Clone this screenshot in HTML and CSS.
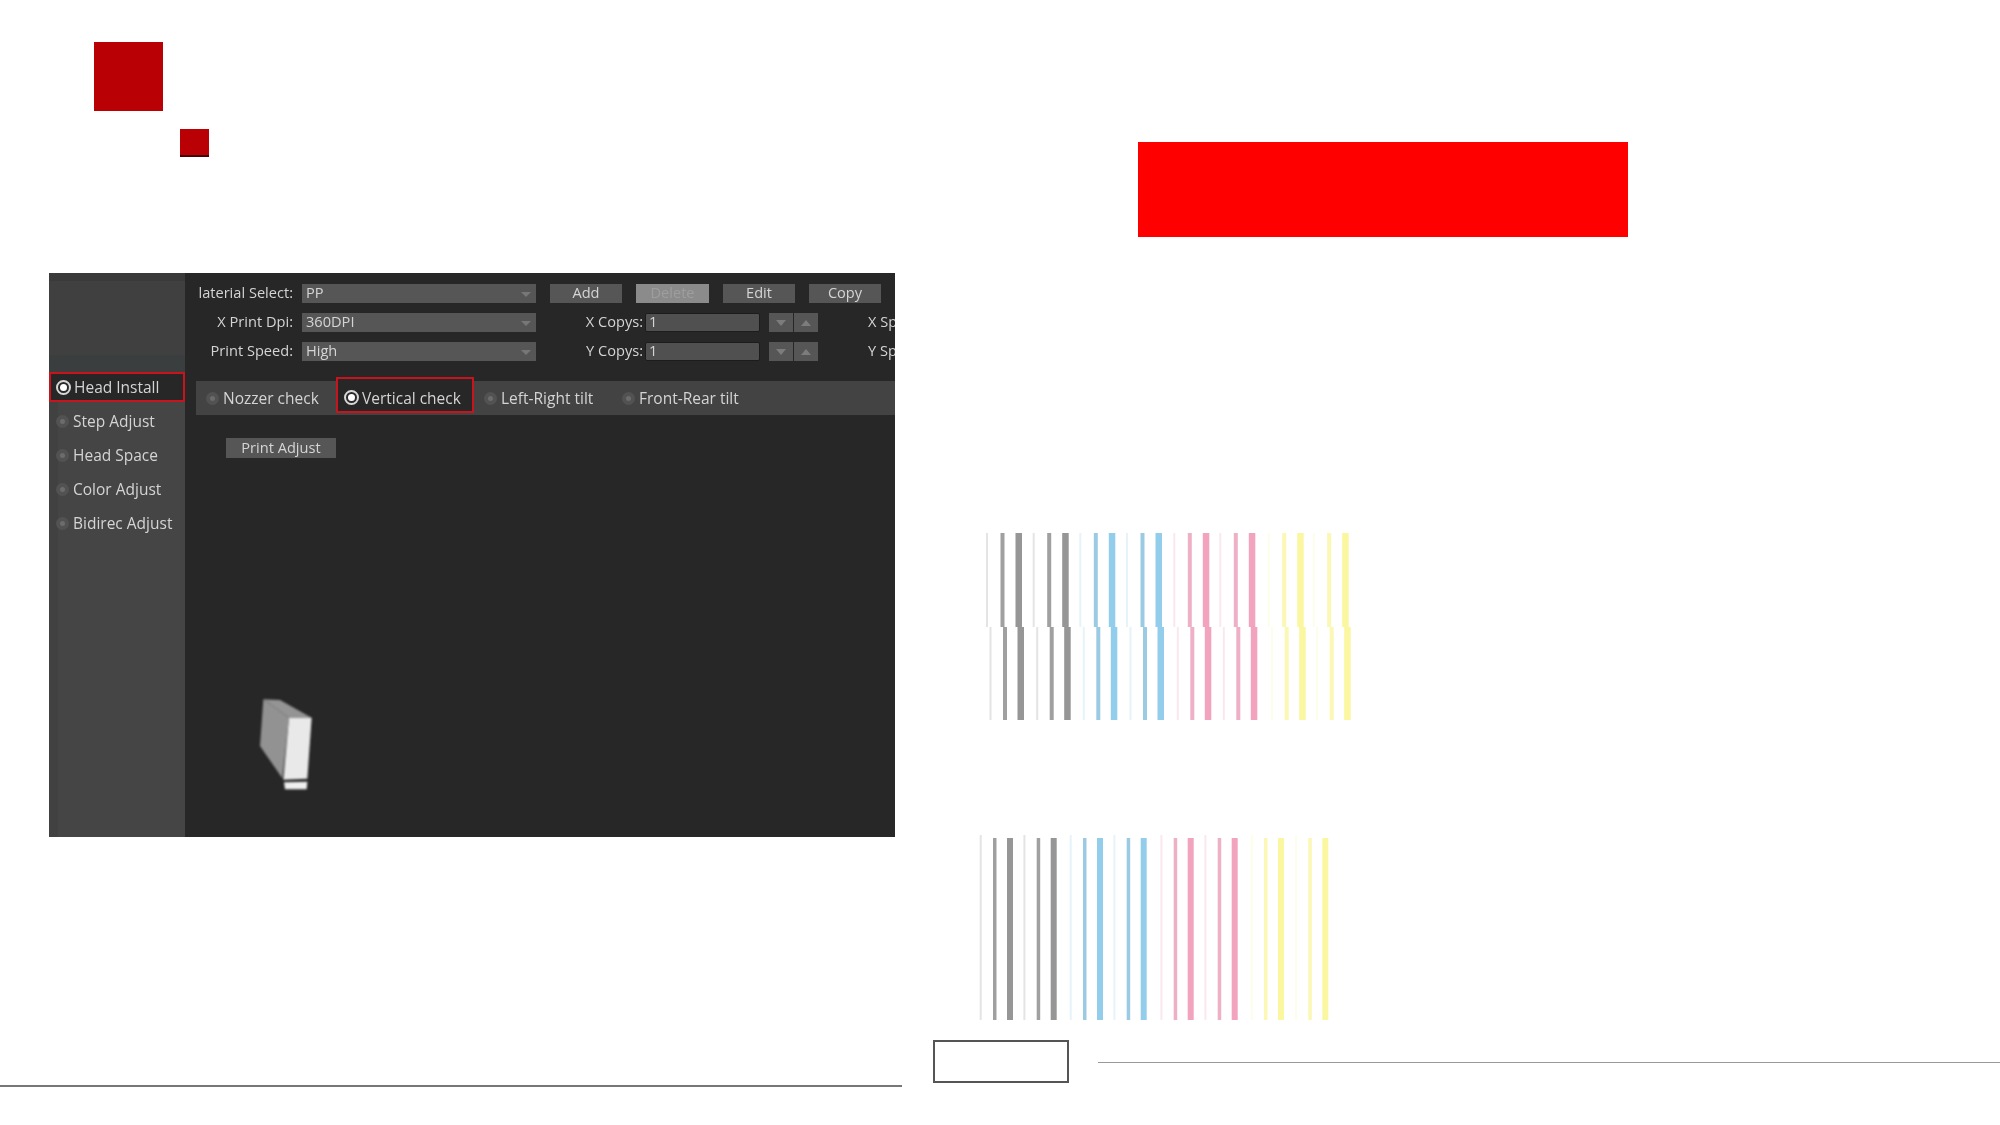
FILE: index.html
```html
<!DOCTYPE html>
<html lang="en">
<head>
<meta charset="UTF-8">
<title>Head Install - Vertical check</title>
<link rel="stylesheet" href="styles.css">
</head>
<body>

<div class="slide">
    <!-- left half: title marks, software capture, rule -->
    <div class="left">
        <div class="mark-big"></div>
        <div class="mark-small"></div>

        <div class="panel">
            <div class="side">
                <div class="side-item on"><span class="radio on"></span>Head Install</div>
                <div class="side-item"><span class="radio"></span>Step Adjust</div>
                <div class="side-item"><span class="radio"></span>Head Space</div>
                <div class="side-item"><span class="radio"></span>Color Adjust</div>
                <div class="side-item"><span class="radio"></span>Bidirec Adjust</div>
            </div>
            <div class="main">
                <div class="form-row">
                    <span class="label">laterial Select:</span>
                    <span class="select">PP</span>
                    <span class="btn first">Add</span>
                    <span class="btn disabled">Delete</span>
                    <span class="btn">Edit</span>
                    <span class="btn">Copy</span>
                </div>
                <div class="form-row">
                    <span class="label">X Print Dpi:</span>
                    <span class="select">360DPI</span>
                    <span class="label wide">X Copys:</span>
                    <span class="input">1</span>
                    <span class="spin"><i class="down"></i><i class="up"></i></span>
                    <span class="label far">X Sp</span>
                </div>
                <div class="form-row">
                    <span class="label">Print Speed:</span>
                    <span class="select">High</span>
                    <span class="label wide">Y Copys:</span>
                    <span class="input">1</span>
                    <span class="spin"><i class="down"></i><i class="up"></i></span>
                    <span class="label far">Y Sp</span>
                </div>

                <div class="tabs">
                    <div class="tab t1"><span class="radio"></span>Nozzer check</div>
                    <div class="tab on"><span class="radio on"></span>Vertical check</div>
                    <div class="tab t3"><span class="radio"></span>Left-Right tilt</div>
                    <div class="tab t4"><span class="radio"></span>Front-Rear tilt</div>
                </div>

                <div class="print-btn">Print Adjust</div>

                <!-- print head -->
                <svg class="head" width="150" height="150" viewBox="0 0 450 450">
                    <polygon points="130,88 180,90 275,143 207,143" fill="#949494"/>
                    <polygon points="130,88 207,143 187,325 120,228" fill="#929292"/>
                    <polygon points="207,143 275,143 262,326 190,329" fill="#e9e9e9"/>
                    <polygon points="192,337 262,335 260,358 195,358" fill="#efefef"/>
                </svg>
            </div>
        </div>

        <div class="rule-left"></div>
    </div>

    <!-- right half: banner, test prints, page box -->
    <div class="right">
        <div class="banner"></div>

        <svg class="print" width="420" height="210" viewBox="0 0 420 210">
            <defs>
                <g id="up">
                    <rect class="faint" x="26" y="13" width="2" height="94"/>
                    <rect class="mid" x="40.500" y="13" width="4" height="94"/>
                    <rect class="thick" x="55.500" y="13" width="6.500" height="94"/>
                </g>
                <g id="down">
                    <rect class="faint" x="29.500" y="107" width="2" height="93"/>
                    <rect class="mid" x="43" y="107" width="4" height="93"/>
                    <rect class="thick" x="57.500" y="107" width="6.500" height="93"/>
                </g>
            </defs>
            <g class="c-gray">
                <use href="#up"/><use href="#up" x="46.700"/>
                <use href="#down"/><use href="#down" x="46.700"/>
            </g>
            <g class="c-blue">
                <use href="#up" x="93.300"/><use href="#up" x="140"/>
                <use href="#down" x="93.300"/><use href="#down" x="140"/>
            </g>
            <g class="c-pink">
                <use href="#up" x="187.300"/><use href="#up" x="233.300"/>
                <use href="#down" x="187.300"/><use href="#down" x="233.300"/>
            </g>
            <g class="c-yellow">
                <use href="#up" x="281.700"/><use href="#up" x="326.700"/>
                <use href="#down" x="281.700"/><use href="#down" x="326.700"/>
            </g>
        </svg>

        <svg class="print second" width="420" height="210" viewBox="0 0 420 210">
            <defs>
                <g id="set">
                    <rect class="faint" x="19.700" y="15" width="2" height="185"/>
                    <rect class="mid" x="33" y="18" width="3.500" height="182"/>
                    <rect class="thick" x="47" y="18" width="6" height="182"/>
                </g>
            </defs>
            <g class="c-gray"><use href="#set"/><use href="#set" x="43.700"/></g>
            <g class="c-blue"><use href="#set" x="90"/><use href="#set" x="133.700"/></g>
            <g class="c-pink"><use href="#set" x="180.700"/><use href="#set" x="224.700"/></g>
            <g class="c-yellow"><use href="#set" x="271"/><use href="#set" x="315.300"/></g>
        </svg>

        <div class="foot">
            <div class="page-box"></div>
            <div class="rule-right"></div>
        </div>
    </div>
</div>

</body>
</html>
```

FILE: styles.css
```css
body {
    margin: 0;
    background-color: #fff;
    font-family: "Open Sans", "Liberation Sans", sans-serif;
}
.slide {
    display: flex;
    width: 2000px;
    height: 1125px;
    overflow: hidden;
}

/* left half */
.left {
    flex: none;
    width: 902px;
    padding-top: 42px;
}
.mark-big {
    width: 69px;
    height: 69px;
    margin-left: 94px;
    background-color: #b80005;
}
.mark-small {
    width: 29px;
    height: 26px;
    margin: 18px 0 0 180px;
    background-color: #b80005;
    border-bottom: 2px solid #4a0003;
}
.rule-left {
    height: 2px;
    margin-top: 248px;
    background-color: #777;
}

/* software capture */
.panel {
    display: flex;
    width: 846px;
    height: 564px;
    margin: 116px 0 0 49px;
    overflow: hidden;
    background-color: #272727;
    color: #d4d4d4;
    font-size: 15.500px;
    filter: blur(0.45px);
}
.side {
    flex: none;
    width: 136px;
    padding-top: 99px;
    box-sizing: border-box;
    background:
        linear-gradient(#3a3a3a 0 8px, #404040 8px 82px, #3a3e3e 82px 99px, transparent 99px),
        linear-gradient(90deg, #414141 9px, #454545 9px);
}
.side-item {
    display: flex;
    align-items: center;
    height: 34px;
    padding-left: 7px;
    box-sizing: border-box;
    white-space: nowrap;
}
.side-item.on {
    height: 30px;
    margin-bottom: 2px;
    padding-left: 5px;
    background-color: #272727;
    border: 2px solid #c8141c;
}
.radio {
    flex: none;
    position: relative;
    width: 13px;
    height: 13px;
    margin-right: 4px;
    border-radius: 50%;
    background-color: #525252;
}
.radio::after {
    content: "";
    position: absolute;
    top: 4px;
    left: 4px;
    width: 5px;
    height: 5px;
    border-radius: 50%;
    background-color: #6c6c6c;
}
.radio.on {
    width: 15px;
    height: 15px;
    margin-right: 3px;
    box-sizing: border-box;
    background-color: #2a2a2a;
    border: 2px solid #d8d8d8;
}
.radio.on::after {
    top: 2px;
    left: 2px;
    width: 7px;
    height: 7px;
    background-color: #fff;
}

.main {
    flex: none;
    width: 710px;
    padding-top: 11px;
}
.form-row {
    display: flex;
    align-items: flex-start;
    height: 19px;
    margin-bottom: 10px;
    font-size: 14.600px;
    line-height: 17px;
    white-space: nowrap;
}
.label {
    flex: none;
    width: 108px;
    text-align: right;
}
.label.wide {
    width: 107px;
}
.label.far {
    width: auto;
    margin-left: 50px;
}
.select {
    flex: none;
    position: relative;
    width: 234px;
    height: 19px;
    margin-left: 9px;
    padding-left: 4px;
    box-sizing: border-box;
    background-color: #565656;
}
.select::after {
    content: "";
    position: absolute;
    top: 8px;
    right: 5px;
    border: 5px solid transparent;
    border-top: 5px solid #777;
    border-bottom: 0;
}
.btn {
    flex: none;
    width: 72px;
    height: 19px;
    margin-left: 14px;
    text-align: center;
    background-color: #565656;
}
.btn.disabled {
    width: 73px;
    background-color: #8b8b8b;
    color: #9e9e9e;
}
.input {
    flex: none;
    width: 115px;
    height: 19px;
    margin-left: 2px;
    padding-left: 3px;
    box-sizing: border-box;
    line-height: 15px;
    background-color: #505050;
    border: 1px solid #1c1c1c;
    border-radius: 2px;
}
.spin {
    flex: none;
    display: flex;
    gap: 1px;
    margin-left: 9px;
}
.spin i {
    position: relative;
    width: 24px;
    height: 19px;
    background-color: #565656;
}
.spin i::after {
    content: "";
    position: absolute;
    top: 7px;
    left: 7px;
    border: 5px solid transparent;
}
.spin .down::after {
    border-top: 6px solid #7c7c7c;
    border-bottom: 0;
}
.spin .up::after {
    border-bottom: 6px solid #7c7c7c;
    border-top: 0;
}

.tabs {
    display: flex;
    height: 34px;
    margin: 20px 0 0 11px;
    background-color: #434343;
    font-size: 15.500px;
    white-space: nowrap;
}
.tab {
    display: flex;
    align-items: center;
    height: 34px;
}
.tab.t1 {
    padding-left: 10px;
    width: 140px;
    box-sizing: border-box;
}
.tab.on {
    width: 138px;
    height: 36px;
    margin-top: -4px;
    padding: 5px 0 0 6px;
    box-sizing: border-box;
    background-color: #272727;
    border: 2px solid #c8141c;
}
.tab.t3 {
    margin-left: 10px;
    width: 138px;
}
.print-btn {
    width: 110px;
    height: 20px;
    margin: 23px 0 0 41px;
    line-height: 18px;
    text-align: center;
    font-size: 14.600px;
    background-color: #565656;
}
.head {
    display: block;
    margin: 212px 0 0 35px;
    filter: blur(0.8px);
}

/* right half */
.right {
    flex: 1;
    padding-top: 142px;
}
.banner {
    width: 490px;
    height: 95px;
    margin-left: 236px;
    background-color: #f00;
}
.print {
    display: block;
    margin: 283px 0 0 58px;
    filter: blur(0.5px);
}
.print.second {
    margin-top: 90px;
}
.c-gray { --faint: #e4e4e4; --mid: #a0a0a0; --thick: #969696; }
.c-blue { --faint: #e6f4fa; --mid: #9bcbe3; --thick: #93cdec; }
.c-pink { --faint: #fae8ee; --mid: #eeb0c6; --thick: #f2a3bd; }
.c-yellow { --faint: #fdfdec; --mid: #fbf7b4; --thick: #fbf7a0; }
.faint { fill: var(--faint); }
.mid { fill: var(--mid); }
.thick { fill: var(--thick); }

.foot {
    display: flex;
    align-items: center;
    gap: 29px;
    margin: 10px 0 0 31px;
}
.page-box {
    flex: none;
    width: 136px;
    height: 43px;
    box-sizing: border-box;
    border: 2px solid #555;
}
.rule-right {
    flex: 1;
    height: 1px;
    margin-top: 1px;
    background-color: #999;
}
```
